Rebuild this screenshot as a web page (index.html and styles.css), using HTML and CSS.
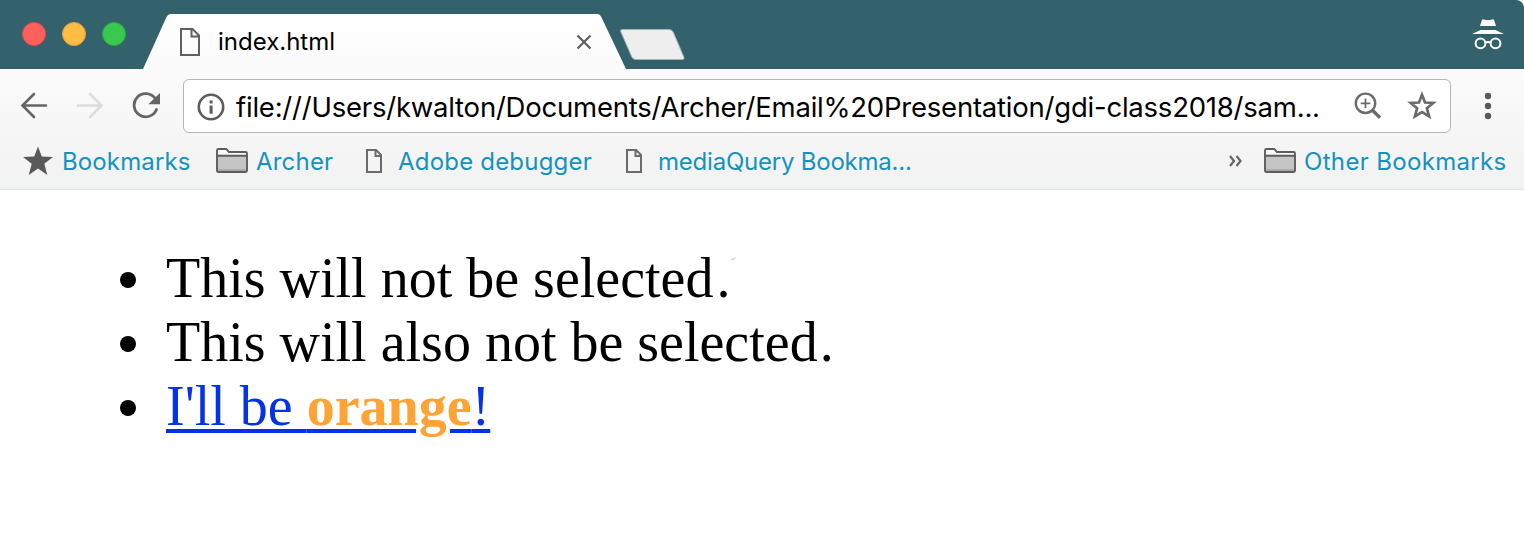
FILE: index.html
```html
<!DOCTYPE html>
<html lang="en">
<head>
<meta charset="utf-8">
<title>index.html</title>
<link rel="stylesheet" href="styles.css">
</head>
<body>
<svg class="defs" width="0" height="0">
  <symbol id="page" viewBox="0 0 16 24"><path d="M1 1h9l5 5v17H1zM9.500 1v6H15" fill="none" stroke="#6b6b6b" stroke-width="2"/></symbol>
  <symbol id="folder" viewBox="0 0 32 26">
    <path d="M1 7V3.500q0-1.500 1.500-1.500h7q1 0 1.700.9L12.800 5H29.500Q31 5 31 6.500V8z" fill="#fafafa"/>
    <path d="M1 8.500h30V25H1z" fill="#c5c5c5"/><path d="M1 22h30v2H1z" fill="#ababab"/>
    <path d="M1 3.500Q1 2 2.500 2h7q1 0 1.700.9L12.800 5H29.500Q31 5 31 6.500V23.500Q31 25 29.500 25H2.500Q1 25 1 23.500zM1 8.700h30" fill="none" stroke="#5c5c5c" stroke-width="1.900"/>
  </symbol>
</svg>
<div class="titlebar">
  <div class="lights"><i class="light red"></i><i class="light yellow"></i><i class="light green"></i></div>
  <div class="tab">
    <svg class="tab-page" width="20" height="28" viewBox="0 0 20 28"><path d="M1 1h11.500L19 7.500V27H1zM11.500 1v7.500H19" fill="none" stroke="#606060" stroke-width="2"/></svg>
    <span class="tab-title">index.html</span>
    <svg class="close" width="16" height="16" viewBox="0 0 16 16"><path d="M1.500 1.500l13 13m0-13l-13 13" stroke="#5f5f5f" stroke-width="2.200"/></svg>
  </div>
  <svg class="newtab" width="66" height="33" viewBox="0 0 66 33"><path d="M3.500 1.500H50q3 0 4.200 2.600L65 29.500q.5 2-1.500 2H17q-3 0-4.200-2.500L1.700 3.500Q1 1.500 3.500 1.500z" fill="#eee" stroke="#a9b1b3"/></svg>
  <svg class="incognito" width="32" height="32" viewBox="0 0 32 32"><g fill="#fff"><path d="M9.800 1.500Q10.500 -.3 12.200.5q3.800 1.400 7.600 0Q21.500 -.3 22.200 1.500L24 7H8z"/><path d="M8.500 11h15L32 15H0z"/></g><g fill="none" stroke="#fff" stroke-width="2"><circle cx="8.500" cy="24.300" r="4.900"/><circle cx="23.500" cy="24.300" r="4.900"/><path d="M13 24q3-1.800 6 0"/></g></svg>
</div>
<div class="chrome">
  <div class="toolbar">
    <svg class="back" width="28" height="28" viewBox="0 0 28 28"><path d="M26 13.500H3M14 2L2.500 13.500 14 25" fill="none" stroke="#656565" stroke-width="2.600" stroke-linecap="round"/></svg>
    <svg class="forward" width="28" height="28" viewBox="0 0 28 28"><path d="M2 13.500h23M14 2l11.500 11.500L14 25" fill="none" stroke="#dcdcdc" stroke-width="2.600" stroke-linecap="round"/></svg>
    <svg class="reload" width="28" height="28" viewBox="0 0 28 28"><path d="M23 6.200A11.600 11.600 0 1 0 24.500 17.500" fill="none" stroke="#656565" stroke-width="2.800" stroke-linecap="round"/><path d="M28 1v11.200H16.300z" fill="#656565"/></svg>
    <div class="omnibox">
      <svg class="info" width="28" height="28" viewBox="0 0 28 28"><circle cx="14" cy="14" r="12.200" fill="none" stroke="#5d5d5d" stroke-width="2.600"/><path d="M12.600 7.500h3v3h-3zM12.600 12.500h3v8.300h-3z" fill="#5d5d5d"/></svg>
      <span class="url">file:///Users/kwalton/Documents/Archer/Email%20Presentation/gdi-class2018/sam...</span>
      <svg class="zoom" width="28" height="28" viewBox="0 0 28 28"><circle cx="11.500" cy="11.300" r="9.700" fill="none" stroke="#6b6b6b" stroke-width="2.400"/><path d="M11.500 6.500v9.600M6.700 11.300h9.600" stroke="#6b6b6b" stroke-width="1.800"/><path d="M18.500 18.300l7.500 7.500" stroke="#6b6b6b" stroke-width="3.400"/></svg>
      <svg class="star" width="30" height="30" viewBox="0 0 30 30"><path d="M15 3.700l3 7.800 8.300.5-6.400 5.300 2.200 8.100L15 21l-7.100 4.400 2.200-8.100-6.400-5.300 8.300-.5z" fill="none" stroke="#6b6b6b" stroke-width="2.700"/></svg>
    </div>
    <svg class="menu" width="8" height="28" viewBox="0 0 8 28" fill="#5a5a5a"><circle cx="4" cy="4" r="3.200"/><circle cx="4" cy="14" r="3.200"/><circle cx="4" cy="24" r="3.200"/></svg>
  </div>
  <div class="bookmarks">
    <svg class="bstar" width="30" height="30" viewBox="0 0 30 30"><path d="M15 .5l3.800 10.100L30 11l-8.700 6.800L24.300 29 15 22.500 5.700 29l3-11.200L0 11l11.200-.4z" fill="#595959"/></svg>
    <span class="bm w1">Bookmarks</span>
    <svg class="folder f1" width="32" height="26"><use href="#folder"/></svg>
    <span class="bm w2">Archer</span>
    <svg class="page p1" width="16" height="24"><use href="#page"/></svg>
    <span class="bm w3">Adobe debugger</span>
    <svg class="page p2" width="16" height="24"><use href="#page"/></svg>
    <span class="bm w4">mediaQuery Bookma...</span>
    <svg class="more" width="13" height="12" viewBox="0 0 13 12"><path d="M1 1l4 5-4 5M7.500 1l4 5-4 5" fill="none" stroke="#666" stroke-width="2.200"/></svg>
    <svg class="folder f2" width="32" height="26"><use href="#folder"/></svg>
    <span class="bm w5">Other Bookmarks</span>
  </div>
</div>
<ul class="list">
  <li>This will not be selected<span class="dot">.</span><svg class="speck" width="8" height="4" viewBox="0 0 8 4"><path d="M0 3.500L8 0 7 3z" fill="#ddd"/></svg></li>
  <li>This will also not be selected<span class="dot2">.</span></li>
  <li><a class="link" href="#">I'll be <strong>orange</strong>!</a></li>
</ul>
</body>
</html>
```
FILE: styles.css
```css
body { margin: 0; width: 1524px; height: 538px; overflow: hidden; background: #fff; font-family: Inter, "Liberation Sans", sans-serif; }
svg { display: block; flex: none; }
.defs { position: absolute; }
.titlebar { display: flex; height: 69px; background: #33626d; border-top-right-radius: 8px; box-sizing: border-box; }
.lights { display: flex; gap: 16px; padding: 22px 0 0 22px; width: 121px; }
.light { width: 24px; height: 24px; border-radius: 50%; box-sizing: border-box; flex: none; }
.red { background: #ff605c; border: 1px solid #e2494b; }
.yellow { background: #ffbd44; border: 1px solid #dfa33d; }
.green { background: #3ac84e; border: 1px solid #2aac3b; }
.tab { display: flex; width: 483px; height: 55px; margin-top: 14px; background: linear-gradient(#fff, #fbfbfb); clip-path: path("M0 55L23.500 3Q25 0 28 0H454Q457 0 458.300 3L483 55Z"); }
.tab-page { margin: 14px 18px 0 37px; }
.tab-title { width: 358px; font-size: 24px; line-height: 30px; margin-top: 13px; white-space: nowrap; letter-spacing: 0; }
.close { margin-top: 20px; }
.newtab { margin: 28px 0 0 -7px; }
.incognito { margin: 19px 20px 0 auto; }
.chrome { height: 121px; box-sizing: border-box; background: linear-gradient(#fbfbfb, #f2f2f2); border-bottom: 1px solid #d9e2e5; }
.toolbar { display: flex; height: 64px; padding-top: 10px; box-sizing: border-box; }
.back { margin: 13px 0 0 20px; }
.forward { margin: 13px 0 0 28px; }
.reload { margin: 13px 0 0 28px; }
.omnibox { display: flex; align-items: center; width: 1268px; height: 54px; margin-left: 23px; box-sizing: border-box; border: 1px solid #b5b5b5; border-radius: 6px; background: #fff; flex: none; }
.info { margin: 1px 0 0 13px; }
.url { width: 1118px; margin: 2px 0 0 11px; font-size: 27.500px; white-space: nowrap; flex: none; letter-spacing: -.22px; }
.zoom { margin-bottom: 0; }
.star { margin: 0 0 0 25px; }
.menu { margin: 13px 0 0 33px; }
.bookmarks { display: flex; height: 56px; }
.bm { font-size: 24px; line-height: 30px; margin-top: 14px; color: #1592bd; white-space: nowrap; flex: none; }
.bstar { margin: 13px 9px 0 23px; }
.w1 { width: 154px; letter-spacing: .12px; }
.folder { margin: 14px 8px 0 0; }
.w2 { width: 110px; letter-spacing: .2px; }
.page { margin-top: 16px; }
.w3 { width: 210px; margin-left: 16px; letter-spacing: .2px; }
.p2 { margin-left: 18px; }
.w4 { width: 571px; margin-left: 16px; letter-spacing: -.22px; }
.more { margin: 22px 22px 0 0; }
.w5 { letter-spacing: .33px; }
.list { margin: 56px 0 0; padding: 0 0 0 166px; font: 56px/64px "Liberation Serif", serif; list-style: none; }
.list li { display: flex; height: 64px; white-space: nowrap; }
.list li::before { content: ""; width: 16px; height: 16px; border-radius: 50%; background: #000; margin: 26px 30px 0 -46px; flex: none; }
.link { color: #0432e8; text-decoration: underline; text-decoration-thickness: 4px; text-underline-offset: 4px; }
.link strong { color: #ffa334; }
.dot { margin-left: 3px; }
.dot2 { margin-left: 2px; }
.speck { margin: 11px 0 0 -2px; }
```
